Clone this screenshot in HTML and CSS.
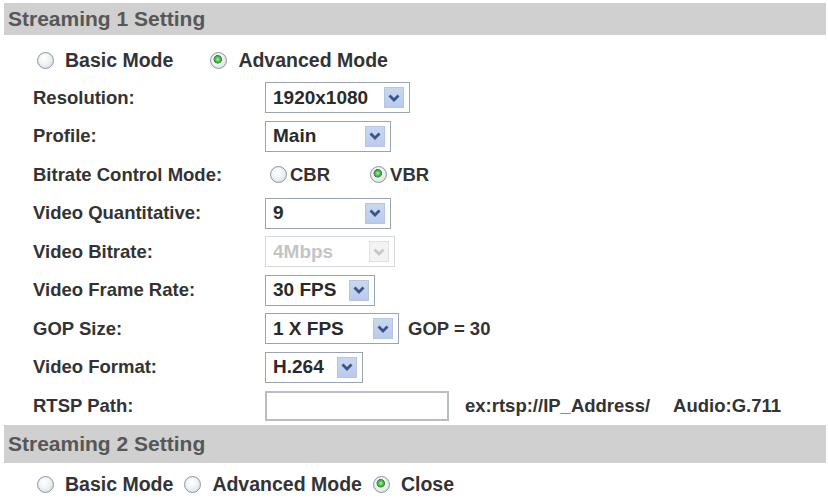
FILE: index.html
```html
<!DOCTYPE html>
<html lang="en">
<head>
    <meta charset="UTF-8">
    <title>Streaming Setting</title>
    <link rel="stylesheet" href="styles.css">
</head>
<body>
    <div class="section-title first">Streaming 1 Setting</div>
    <div class="mode-row">
        <label class="opt wide"><input type="radio" class="radio" name="mode1"> Basic Mode</label>
        <label class="opt"><input type="radio" class="radio" name="mode1" checked> Advanced Mode</label>
    </div>

    <div class="form">
        <div class="row">
            <span class="label">Resolution:</span>
            <div class="select w-res"><span>1920x1080</span><span class="arrow"><svg viewBox="0 0 12 8"><path d="M1.5 1.5 L6 6 L10.5 1.5"/></svg></span></div>
        </div>
        <div class="row">
            <span class="label">Profile:</span>
            <div class="select w-profile"><span>Main</span><span class="arrow"><svg viewBox="0 0 12 8"><path d="M1.5 1.5 L6 6 L10.5 1.5"/></svg></span></div>
        </div>
        <div class="row">
            <span class="label">Bitrate Control Mode:</span>
            <label class="opt tight cbr"><input type="radio" class="radio" name="rate"> CBR</label>
            <label class="opt tight"><input type="radio" class="radio" name="rate" checked> VBR</label>
        </div>
        <div class="row">
            <span class="label">Video Quantitative:</span>
            <div class="select w-profile"><span>9</span><span class="arrow"><svg viewBox="0 0 12 8"><path d="M1.5 1.5 L6 6 L10.5 1.5"/></svg></span></div>
        </div>
        <div class="row">
            <span class="label">Video Bitrate:</span>
            <div class="select w-bitrate disabled"><span>4Mbps</span><span class="arrow"><svg viewBox="0 0 12 8"><path d="M1.5 1.5 L6 6 L10.5 1.5"/></svg></span></div>
        </div>
        <div class="row">
            <span class="label">Video Frame Rate:</span>
            <div class="select w-fps"><span>30 FPS</span><span class="arrow"><svg viewBox="0 0 12 8"><path d="M1.5 1.5 L6 6 L10.5 1.5"/></svg></span></div>
        </div>
        <div class="row">
            <span class="label">GOP Size:</span>
            <div class="select w-gop"><span>1 X FPS</span><span class="arrow"><svg viewBox="0 0 12 8"><path d="M1.5 1.5 L6 6 L10.5 1.5"/></svg></span></div>
            <span class="note gop">GOP = 30</span>
        </div>
        <div class="row">
            <span class="label">Video Format:</span>
            <div class="select w-format"><span>H.264</span><span class="arrow"><svg viewBox="0 0 12 8"><path d="M1.5 1.5 L6 6 L10.5 1.5"/></svg></span></div>
        </div>
        <div class="row">
            <span class="label">RTSP Path:</span>
            <input type="text" class="text-input">
            <span class="note ex">ex:rtsp://IP_Address/</span>
            <span class="note">Audio:G.711</span>
        </div>
    </div>

    <div class="section-title second">Streaming 2 Setting</div>
    <div class="mode-row close-row">
        <label class="opt"><input type="radio" class="radio" name="mode2"> Basic Mode</label>
        <label class="opt"><input type="radio" class="radio" name="mode2"> Advanced Mode</label>
        <label class="opt"><input type="radio" class="radio" name="mode2" checked> Close</label>
    </div>
</body>
</html>
```

FILE: styles.css
```css
body {
    margin: 0;
    background: #fff;
    font-family: "Liberation Sans", Arial, sans-serif;
    font-weight: bold;
    color: #333;
    width: 828px;
    overflow: hidden;
}

.section-title {
    background-color: #d0d0d0;
    color: #575757;
    font-size: 21px;
    margin-left: 4px;
    margin-right: 2px;
    padding-left: 4px;
    display: flex;
    align-items: center;
}

.section-title.first {
    margin-top: 3px;
    height: 32px;
}

.section-title.second {
    height: 38px;
}

.mode-row {
    display: flex;
    align-items: center;
    height: 43.5px;
    padding-left: 37px;
    padding-top: 8px;
    box-sizing: border-box;
    font-size: 19.5px;
}

.close-row {
    height: 38px;
    padding-top: 4px;
}

.opt {
    display: flex;
    align-items: center;
    gap: 11px;
    margin-right: 11px;
}

.opt.wide {
    margin-right: 37px;
}

.opt.tight {
    gap: 3px;
}

.opt.cbr {
    margin-left: 5px;
    margin-right: 40px;
}

.radio {
    appearance: none;
    -webkit-appearance: none;
    margin: 0;
    width: 17px;
    height: 17px;
    border-radius: 50%;
    border: 1px solid #8c98aa;
    background: radial-gradient(circle at 40% 35%, #ffffff 0, #f2f4f6 40%, #d6dbe1 100%);
    box-shadow: inset 0 0 1px #c0c8d4;
    flex: none;
}

.radio:checked {
    background:
        radial-gradient(circle at 45% 42%, #b8f0b0 0, #4cb84c 2.5px, #2f8f2f 4px, transparent 4.5px),
        radial-gradient(circle at 40% 35%, #ffffff 0, #f2f4f6 40%, #d6dbe1 100%);
}

.form {
    padding-left: 33px;
    font-size: 18.5px;
}

.row {
    display: flex;
    align-items: center;
    height: 38.5px;
}

.label {
    width: 232px;
    flex: none;
}

.select {
    display: flex;
    align-items: center;
    justify-content: space-between;
    height: 31px;
    box-sizing: border-box;
    border: 1px solid #9aa4b2;
    background: #fff;
    padding-left: 7px;
    padding-right: 5px;
    font-size: 19px;
    color: #2a2a2a;
}

.arrow {
    width: 20px;
    height: 21px;
    box-sizing: border-box;
    background: linear-gradient(#c9d8f1, #b9cbec);
    border: 1px solid #b6c6e2;
    display: flex;
    align-items: center;
    justify-content: center;
}

.arrow svg {
    width: 12px;
    height: 8px;
    fill: none;
    stroke: #3a5485;
    stroke-width: 2.8;
}

.select.disabled {
    border-color: #d4d7db;
    color: #c4c4c4;
}

.select.disabled .arrow {
    background: #f3f3f3;
    border-color: #e0e0e0;
}

.select.disabled .arrow svg {
    stroke: #c8c8c8;
}

.w-res { width: 145px; }
.w-profile { width: 126px; }
.w-bitrate { width: 130px; }
.w-fps { width: 110px; }
.w-gop { width: 134px; }
.w-format { width: 98px; }

.text-input {
    width: 184px;
    height: 30px;
    box-sizing: border-box;
    border: 2px solid #b7bec8;
    margin: 0;
    background: #fff;
}

.note {
    font-size: 18.5px;
}

.note.gop {
    margin-left: 9px;
}

.note.ex {
    margin-left: 16px;
    margin-right: 23px;
}
```
